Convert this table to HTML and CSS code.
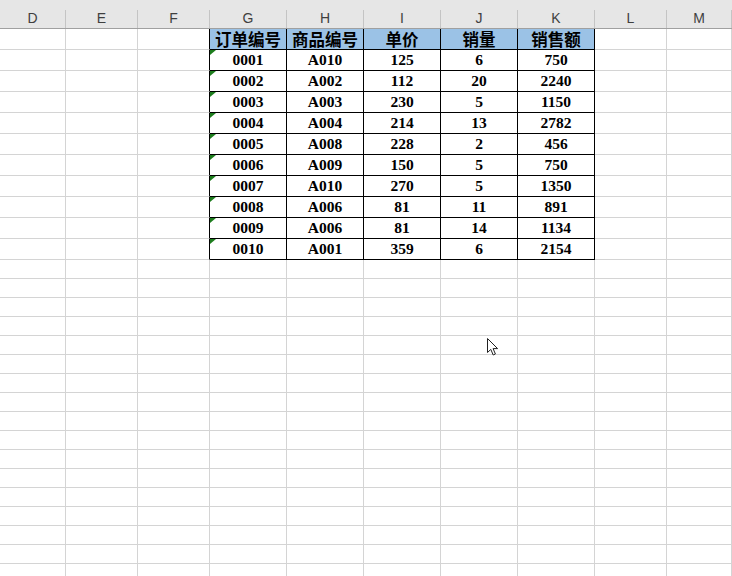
FILE: index.html
```html
<!DOCTYPE html>
<html>
<head>
<meta charset="utf-8">
<link rel="stylesheet" href="styles.css">
</head>
<body>
<div class="sheet">
  <div class="hdr">
    <span>D</span><span>E</span><span>F</span><span>G</span><span>H</span><span>I</span><span>J</span><span>K</span><span>L</span><span>M</span>
  </div>

  <div class="row trow">
    <i></i><i></i><i class="edge"></i>
    <b class="t th">订单编号</b><b class="t th">商品编号</b><b class="t th">单价</b><b class="t th">销量</b><b class="t th">销售额</b>
    <i></i><i></i>
  </div>
  <div class="row trow"><i></i><i></i><i class="edge"></i><b class="t tx">0001</b><b class="t">A010</b><b class="t">125</b><b class="t">6</b><b class="t">750</b><i></i><i></i></div>
  <div class="row trow"><i></i><i></i><i class="edge"></i><b class="t tx">0002</b><b class="t">A002</b><b class="t">112</b><b class="t">20</b><b class="t">2240</b><i></i><i></i></div>
  <div class="row trow"><i></i><i></i><i class="edge"></i><b class="t tx">0003</b><b class="t">A003</b><b class="t">230</b><b class="t">5</b><b class="t">1150</b><i></i><i></i></div>
  <div class="row trow"><i></i><i></i><i class="edge"></i><b class="t tx">0004</b><b class="t">A004</b><b class="t">214</b><b class="t">13</b><b class="t">2782</b><i></i><i></i></div>
  <div class="row trow"><i></i><i></i><i class="edge"></i><b class="t tx">0005</b><b class="t">A008</b><b class="t">228</b><b class="t">2</b><b class="t">456</b><i></i><i></i></div>
  <div class="row trow"><i></i><i></i><i class="edge"></i><b class="t tx">0006</b><b class="t">A009</b><b class="t">150</b><b class="t">5</b><b class="t">750</b><i></i><i></i></div>
  <div class="row trow"><i></i><i></i><i class="edge"></i><b class="t tx">0007</b><b class="t">A010</b><b class="t">270</b><b class="t">5</b><b class="t">1350</b><i></i><i></i></div>
  <div class="row trow"><i></i><i></i><i class="edge"></i><b class="t tx">0008</b><b class="t">A006</b><b class="t">81</b><b class="t">11</b><b class="t">891</b><i></i><i></i></div>
  <div class="row trow"><i></i><i></i><i class="edge"></i><b class="t tx">0009</b><b class="t">A006</b><b class="t">81</b><b class="t">14</b><b class="t">1134</b><i></i><i></i></div>
  <div class="row trow"><i></i><i></i><i class="edge"></i><b class="t tx">0010</b><b class="t">A001</b><b class="t">359</b><b class="t">6</b><b class="t">2154</b><i></i><i></i></div>

  <div class="row"><i></i><i></i><i></i><i></i><i></i><i></i><i></i><i></i><i></i><i></i></div>
  <div class="row"><i></i><i></i><i></i><i></i><i></i><i></i><i></i><i></i><i></i><i></i></div>
  <div class="row"><i></i><i></i><i></i><i></i><i></i><i></i><i></i><i></i><i></i><i></i></div>
  <div class="row"><i></i><i></i><i></i><i></i><i></i><i></i><i></i><i></i><i></i><i></i></div>
  <div class="row"><i></i><i></i><i></i><i></i><i></i><i></i><i></i><i></i><i></i><i></i></div>
  <div class="row"><i></i><i></i><i></i><i></i><i></i><i></i><i></i><i></i><i></i><i></i></div>
  <div class="row"><i></i><i></i><i></i><i></i><i></i><i></i><i></i><i></i><i></i><i></i></div>
  <div class="row"><i></i><i></i><i></i><i></i><i></i><i></i><i></i><i></i><i></i><i></i></div>
  <div class="row"><i></i><i></i><i></i><i></i><i></i><i></i><i></i><i></i><i></i><i></i></div>
  <div class="row"><i></i><i></i><i></i><i></i><i></i><i></i><i></i><i></i><i></i><i></i></div>
  <div class="row"><i></i><i></i><i></i><i></i><i></i><i></i><i></i><i></i><i></i><i></i></div>
  <div class="row"><i></i><i></i><i></i><i></i><i></i><i></i><i></i><i></i><i></i><i></i></div>
  <div class="row"><i></i><i></i><i></i><i></i><i></i><i></i><i></i><i></i><i></i><i></i></div>
  <div class="row"><i></i><i></i><i></i><i></i><i></i><i></i><i></i><i></i><i></i><i></i></div>
  <div class="row"><i></i><i></i><i></i><i></i><i></i><i></i><i></i><i></i><i></i><i></i></div>
  <div class="row"><i></i><i></i><i></i><i></i><i></i><i></i><i></i><i></i><i></i><i></i></div>
  <div class="row"><i></i><i></i><i></i><i></i><i></i><i></i><i></i><i></i><i></i><i></i></div>
</div>

<svg class="cursor" width="13" height="20" viewBox="0 0 13 20">
  <path d="M1.5 1.5 L1.5 15.5 L4.8 12.4 L7.2 18 L9.4 17 L7.1 11.6 L11.6 11.6 Z" fill="#fff" stroke="#222" stroke-width="1" stroke-linejoin="miter"/>
</svg>
</body>
</html>
```

FILE: styles.css
```css
html, body {
  margin: 0;
  padding: 0;
}
body {
  width: 732px;
  height: 576px;
  overflow: hidden;
  background: #fff;
  position: relative;
  font-family: "Liberation Serif", "Times New Roman", serif;
}
.sheet {
  display: flex;
  flex-direction: column;
}
.hdr, .row {
  display: grid;
  grid-template-columns: 66px 72px 72px 77px 77px 77px 77px 77px 72px 1fr;
}
.hdr {
  height: 29px;
  box-sizing: border-box;
  padding-top: 10px;
  background: #e6e6e6;
  border-bottom: 1px solid #a0a0a0;
}
.hdr span {
  border-right: 1px solid #c4c4c4;
  font-family: "Liberation Sans", Arial, sans-serif;
  font-size: 14px;
  line-height: 17px;
  color: #3f3f3f;
  text-align: center;
}
.row {
  height: 19px;
}
.trow {
  height: 21px;
}
.row i, .row b {
  display: block;
  box-sizing: border-box;
  border-right: 1px solid #d4d4d4;
  border-bottom: 1px solid #d4d4d4;
}
.row i.edge {
  border-right-color: #000;
}
.row b.t {
  position: relative;
  border-right-color: #000;
  border-bottom-color: #000;
  text-align: center;
  font-weight: 700;
  font-size: 15.5px;
  line-height: 20px;
  color: #000;
}
.row b.th {
  background: #9bc2e6;
  font-family: "Noto Sans CJK SC", sans-serif;
  font-size: 16.5px;
  line-height: 19px;
  padding-top: 1px;
}
.tx::before {
  content: "";
  position: absolute;
  left: 0;
  top: 0;
  width: 0;
  height: 0;
  border-top: 5px solid #1d7d1d;
  border-right: 6px solid transparent;
}
.cursor {
  position: absolute;
  left: 486px;
  top: 337px;
}
```
